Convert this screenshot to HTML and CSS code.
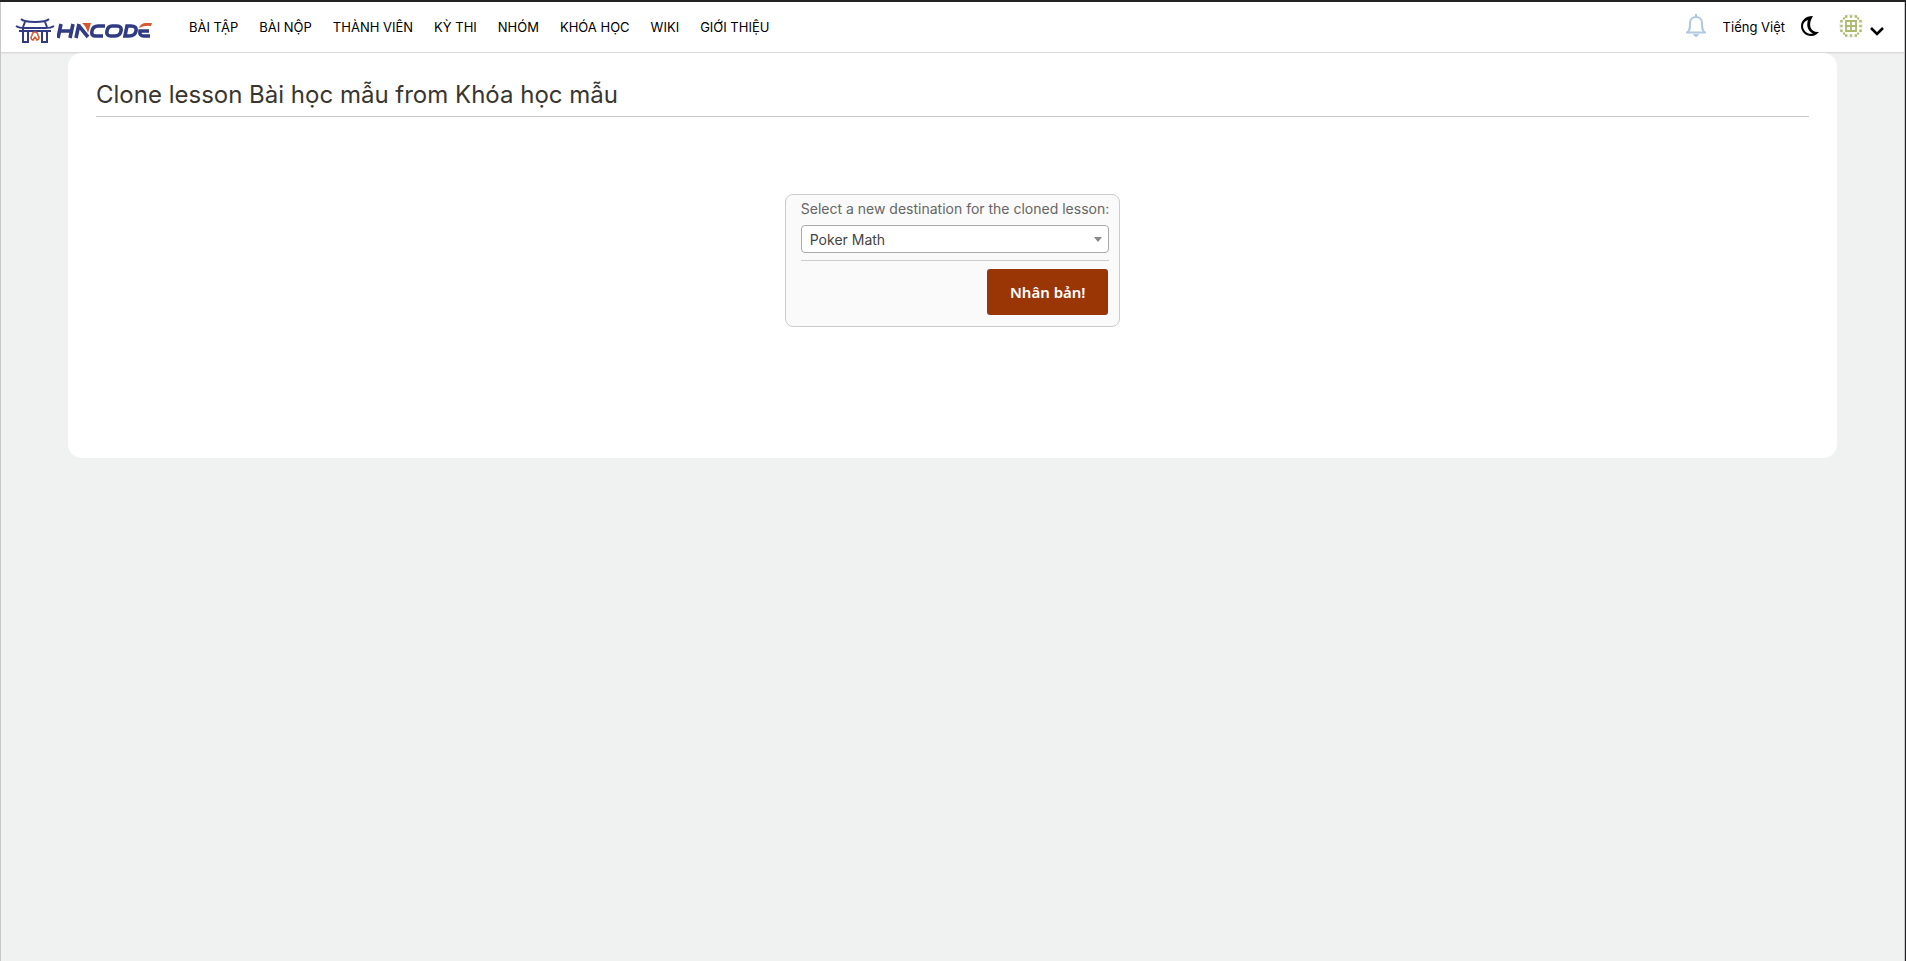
FILE: index.html
```html
<!DOCTYPE html>
<html lang="vi">
<head>
<meta charset="utf-8">
<title>Clone lesson</title>
<link rel="stylesheet" href="styles.css">
</head>
<body>
<header class="navbar">
  <a class="logo" href="#" aria-label="HNCODE">
    <svg class="gate" viewBox="0 0 40 26" width="40" height="26" fill="none" stroke="#303b83" stroke-width="2">
      <path d="M6 1Q9 4 20 4T34 1M1 8Q4 10 10 10H30Q36 10 39 8"/>
      <path d="M10 4L8 9M30 4L32 9"/>
      <path d="M4 13H36M8 10V24H13V13M35 13H32V24H27V13"/>
      <path d="M17 18Q17 14 20 14T23 18M17 18a2 2 0 1 0 2 3.500M23 18a2 2 0 1 1-2 3.500M18 22L20 19L22 22" stroke="#d6562f" stroke-width="1.500"/>
    </svg>
    <svg class="wordmark" viewBox="0 0 95 16" width="95" height="16" fill="none" stroke="#303b83" stroke-width="3.600">
      <path d="M4 1L1 15M16 1L13 15M3 8H14M22 1L19 15M22 3L31 14M48 3H41Q36 3 35 8Q34 13 38 13H46M55 3H60Q65 3 64 8Q63 13 58 13H54Q49 13 50 8Q51 3 55 3ZM70 3H74Q80 3 79 8Q78 13 72 13H68ZM93 13H87Q82 13 83 8H92"/>
      <path d="M25 0H34L31 10Q29 3 25 0ZM82 5Q84 0 89 0H95L94 3Q88 2 82 5Z" fill="#d6562f" stroke="none"/>
    </svg>
  </a>
  <nav class="menu">
    <a href="#">BÀI TẬP</a><a href="#">BÀI NỘP</a><a href="#">THÀNH VIÊN</a><a href="#">KỲ THI</a><a href="#">NHÓM</a><a href="#">KHÓA HỌC</a><a href="#">WIKI</a><a href="#">GIỚI THIỆU</a>
  </nav>
  <div class="tools">
    <button class="icon bell" type="button" aria-label="Thông báo">
      <svg viewBox="0 0 20 24" width="20" height="24" fill="none" stroke="#b0c7e3" stroke-width="2"><path d="M10 0V3M2 18C4 15 4 14 4 9C4 5 7 3 10 3S16 5 16 9C16 14 16 15 18 18M0 18.500H20"/><path d="M7 20H13Q12 23 10 23T7 20Z" fill="#b0c7e3" stroke="none"/></svg>
    </button>
    <button class="language" type="button">Tiếng Việt</button>
    <button class="icon moon" type="button" aria-label="Chế độ tối">
      <svg viewBox="0 0 18 20" width="18" height="20" fill="#000" fill-rule="evenodd"><path d="M12 0C4 0 0 5 0 10C0 16 5 20 10 20C14 20 16 18 18 16C10 17 6 9 12 0ZM7 4C5 10 7 15 12 17.500C7 19 2 15 2 10C2 7 4 5 7 4Z"/></svg>
    </button>
    <button class="account" type="button" aria-label="Tài khoản">
      <svg viewBox="0 0 24 24" width="24" height="24"><circle cx="12" cy="12" r="11.500" fill="#fff" stroke="#eee"/><g fill="none" stroke="#adb96c"><path d="M6 2.500H18M6 21.500H18M2.500 6V18M21.500 6V18" stroke-width="2.400" stroke-dasharray="2.400 2.400"/><path d="M4 4.500H6M18 4.500H20M4 19.500H6M18 19.500H20" stroke-width="2"/><path d="M7 7H17V17H7ZM12 6V18M6 12H18" stroke-width="1.800"/></g></svg>
      <svg class="chevron" viewBox="0 0 14 9" width="14" height="9" fill="none" stroke="#000" stroke-width="2.600"><path d="M1 1L7 7L13 1"/></svg>
    </button>
  </div>
</header>
<main class="content">
  <h1>Clone lesson Bài học mẫu from Khóa học mẫu</h1>
  <form class="clone-form">
    <label for="destination">Select a new destination for the cloned lesson:</label>
    <div class="select-wrap">
      <select id="destination"><option>Poker Math</option></select>
    </div>
    <hr>
    <button class="submit" type="button">Nhân bản!</button>
  </form>
</main>
</body>
</html>
```
FILE: styles.css
```css
* { box-sizing: border-box; }
html { min-height: 100%; background: #f0f2f1; border-top: 2px solid #232225; border-right: 1px solid #232225; }
body { margin: 0; min-height: calc(100vh - 2px); border-left: 1px solid #c8c8c8; border-right: 1px solid #c8c8c8; font-family: Inter, "Noto Sans", sans-serif; font-size: 14px; color: #333; }
button { border: 0; background: none; padding: 0; font: inherit; color: inherit; cursor: pointer; }
svg { display: block; }
.navbar { display: flex; align-items: center; height: 51px; padding: 0 21px 0 15px; margin: 0 -1px; background: #fff; border-bottom: 1px solid #d9d9d9; box-shadow: 0 1px 1px #e6e6e6; }
.logo { display: flex; align-items: center; gap: 2px; padding-top: 8px; width: 163px; }
.menu { display: flex; gap: 21px; margin-left: 11px; font-size: 13px; }
.menu a { color: #000; text-decoration: none; white-space: nowrap; }
.tools { display: flex; align-items: center; margin-left: auto; color: #000; }
.bell, .moon, .account { margin-bottom: 2px; }
.language { margin: 0 16px 0 17px; font-size: 13px; }
.account { display: flex; align-items: center; gap: 7px; margin-left: 20px; }
.chevron { margin-top: 10px; }
.content { margin: 0 67px; min-height: 405px; padding: 27px 28px; background: #fff; border-radius: 14px; }
h1 { margin: 0; padding-bottom: 7px; border-bottom: 1px solid #c8c8c8; font-size: 24px; line-height: 29px; font-weight: 400; color: #393630; }
.clone-form { width: fit-content; margin: 77px auto 0; padding: 4px 10px 11px 15px; border: 1px solid #ccc; border-radius: 8px; background: #fafafa; }
label { display: block; line-height: 20px; color: #666; }
.select-wrap { display: flex; position: relative; margin-top: 6px; }
.select-wrap::after { content: ""; position: absolute; right: 7px; top: 12px; border: 4px solid transparent; border-top: 5px solid #888; border-bottom: 0; pointer-events: none; }
select { appearance: none; width: 100%; height: 28px; padding: 0 8px; border: 1px solid #aaa; border-radius: 4px; background: #fff; font: inherit; color: #444; }
hr { height: 1px; margin: 7px 0 8px; border: 0; background: #ccc; }
.submit { display: block; margin: 0 1px 0 auto; width: 121px; height: 46px; border-radius: 3px; background: #9a3606; color: #fff; font: 600 15px "Noto Sans", sans-serif; }
```
